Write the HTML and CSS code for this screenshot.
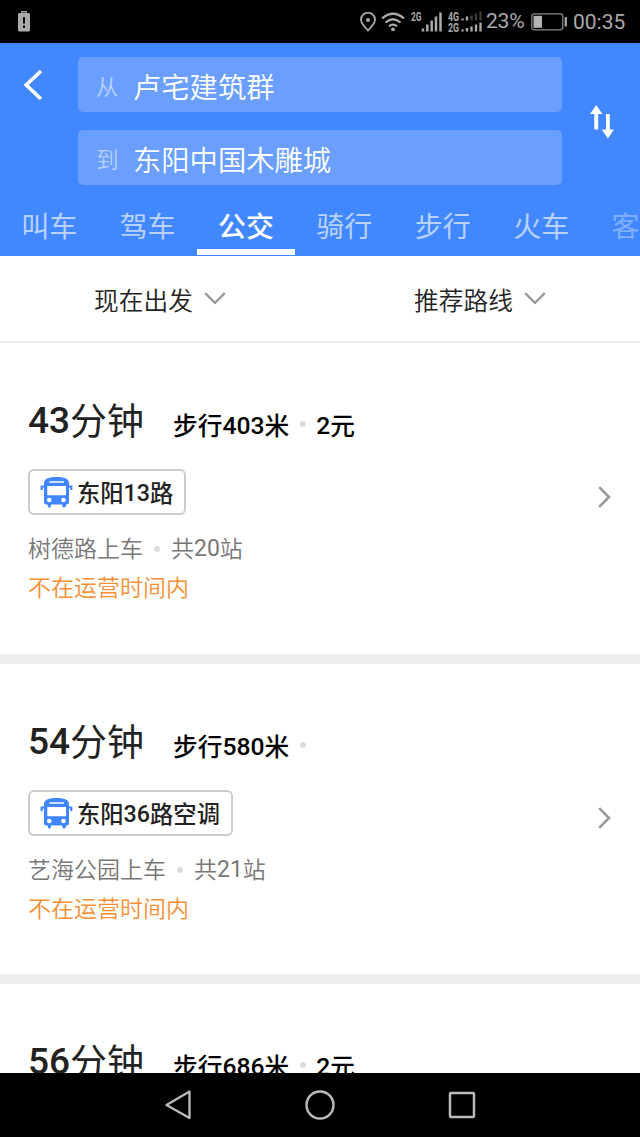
FILE: index.html
```html
<!DOCTYPE html>
<html lang="zh-CN">
<head>
    <meta charset="UTF-8">
    <title>公交路线</title>
    <link rel="stylesheet" href="styles.css">
</head>
<body>
    <svg class="defs" width="0" height="0">
        <symbol id="bus" viewBox="0 0 32 32">
            <path fill="#3f86ff" fill-rule="evenodd" d="M3.500 7 C3.500 2.500 9 1 16 1 S28.500 2.500 28.500 7 V26 Q28.500 28.500 26 28.500 H25.500 V29.500 Q25 31.500 24 31.500 H23 Q22 31.500 21.500 28.500 H10.500 Q10.500 31.500 9.500 31.500 H8.500 Q7.500 31.500 7 28.500 H6 Q3.500 28.500 3.500 26 Z M9.500 5.200 Q8.700 5.200 8.700 6 T9.500 6.800 H22.800 Q23.600 6.800 23.600 6 T22.800 5.200 Z M6.800 10 V19.200 H25.500 V10 Z"/>
            <circle cx="8.800" cy="24" r="2.300" fill="#fff"/>
            <circle cx="23" cy="24" r="2.300" fill="#fff"/>
            <path d="M1.200 14 V10.500 H5 M30.800 14 V10.500 H27.500" fill="none" stroke="#3f86ff" stroke-width="2.200"/>
        </symbol>
    </svg>

    <div class="phone">
        <div class="status">
            <svg class="alert" width="12" height="21" viewBox="0 0 12 21">
                <rect x="3" y="0" width="6" height="1.500" fill="#aaa"/>
                <rect x="0" y="2" width="12" height="18.500" rx="1.500" fill="#aaa"/>
                <path d="M6 6 V12.500 M6 14.500 V17" stroke="#000" stroke-width="2"/>
            </svg>
            <svg class="pin" width="16" height="20" viewBox="0 0 16 20">
                <path d="M8 18.500 C5 15 1 11.500 1 7.700 A7 7 0 0 1 15 7.700 C15 11.500 11 15 8 18.500 Z" fill="none" stroke="#aaa" stroke-width="1.800"/>
                <circle cx="8" cy="8" r="2" fill="#aaa"/>
            </svg>
            <svg class="wifi" width="24" height="20" viewBox="0 0 24 20">
                <g fill="none" stroke="#aaa" stroke-width="2.200">
                    <path d="M1 6.500 Q12 -3 23 6.500"/>
                    <path d="M4.500 10.500 Q12 4 19.500 10.500"/>
                    <path d="M8 14.300 Q12 11 16 14.300"/>
                </g>
                <circle cx="12" cy="17.300" r="1.900" fill="#aaa"/>
            </svg>
            <svg class="signal" width="32" height="22" viewBox="0 0 32 22">
                <text x="0" y="9.500" textLength="10.500" lengthAdjust="spacingAndGlyphs" class="net">2G</text>
                <path d="M12 20.500v-3M16.300 20.500v-7M20.700 20.500v-11M25 20.500v-15M29.500 20.500v-19" stroke="#aaa" stroke-width="2.500"/>
            </svg>
            <svg class="dual" width="35" height="22" viewBox="0 0 35 22">
                <text x="0" y="9.500" textLength="11" lengthAdjust="spacingAndGlyphs" class="net">4G</text>
                <text x="0" y="20.500" textLength="11" lengthAdjust="spacingAndGlyphs" class="net">2G</text>
                <path d="M14.500 9.500v-2M19 9.500v-4M14.500 20.500v-2M19 20.500v-3.500M23.500 20.500v-5M28 20.500v-7M32.500 20.500v-9" stroke="#aaa" stroke-width="2.300"/>
                <path d="M23.500 9.500v-5M28 9.500v-7M32.500 9.500v-9" stroke="#3c3c3c" stroke-width="2.300"/>
            </svg>
            <span class="percent">23%</span>
            <svg class="battery" width="37" height="18" viewBox="0 0 37 18">
                <rect x="0.800" y="0.800" width="31" height="16" rx="2.500" fill="none" stroke="#888" stroke-width="1.300"/>
                <rect x="2.500" y="2.800" width="8.500" height="12" fill="#b5b5b5"/>
                <path d="M34.800 4 V13.500" stroke="#aaa" stroke-width="2.200"/>
            </svg>
            <span class="clock">00:35</span>
        </div>

        <header>
            <div class="search">
                <svg class="back" width="20" height="32" viewBox="0 0 20 32">
                    <path d="M18 2 L3.200 16 L18 30" fill="none" stroke="#fff" stroke-width="3.600"/>
                </svg>
                <div class="fields">
                    <div class="field"><span>从</span>卢宅建筑群</div>
                    <div class="field"><span>到</span>东阳中国木雕城</div>
                </div>
                <svg class="swap" width="24" height="34" viewBox="0 0 24 34">
                    <path d="M6.200 0 L12.400 9 H8.200 V24.500 H4.300 V9 H0 Z M16 9 H19.800 V24.500 H24 L17.900 33.500 L11.800 24.500 H16 Z" fill="#fff"/>
                </svg>
            </div>
            <nav>
                <a>叫车</a>
                <a>驾车</a>
                <a class="active">公交</a>
                <a>骑行</a>
                <a>步行</a>
                <a>火车</a>
                <a class="faded">客车</a>
            </nav>
        </header>

        <div class="filters">
            <div>现在出发
                <svg width="22" height="13" viewBox="0 0 22 13"><path d="M1.200 1.200 L11 10.800 L20.800 1.200" fill="none" stroke="#999" stroke-width="2.400"/></svg>
            </div>
            <div>推荐路线
                <svg width="22" height="13" viewBox="0 0 22 13"><path d="M1.200 1.200 L11 10.800 L20.800 1.200" fill="none" stroke="#999" stroke-width="2.400"/></svg>
            </div>
        </div>

        <main>
            <div class="route">
                <div class="info">
                    <div class="summary"><h2><span class="num">43</span>分钟</h2><b>步行<span class="num">403</span>米</b><i></i><b><span class="num">2</span>元</b></div>
                    <div class="line"><svg width="33" height="32"><use href="#bus"/></svg><div>东阳<span class="num">13</span>路</div></div>
                    <div class="stops">树德路上车<i></i>共<span class="count">20</span>站</div>
                    <div class="warning">不在运营时间内</div>
                </div>
                <svg class="arrow" width="13" height="22" viewBox="0 0 13 22"><path d="M1.200 1.200 L11 11 L1.200 20.800" fill="none" stroke="#999" stroke-width="2.600"/></svg>
            </div>
            <div class="route">
                <div class="info">
                    <div class="summary"><h2><span class="num">54</span>分钟</h2><b>步行<span class="num">580</span>米</b><i></i></div>
                    <div class="line"><svg width="33" height="32"><use href="#bus"/></svg><div>东阳<span class="num">36</span>路空调</div></div>
                    <div class="stops">艺海公园上车<i></i>共<span class="count">21</span>站</div>
                    <div class="warning">不在运营时间内</div>
                </div>
                <svg class="arrow" width="13" height="22" viewBox="0 0 13 22"><path d="M1.200 1.200 L11 11 L1.200 20.800" fill="none" stroke="#999" stroke-width="2.600"/></svg>
            </div>
            <div class="route">
                <div class="info">
                    <div class="summary"><h2><span class="num">56</span>分钟</h2><b>步行<span class="num">686</span>米</b><i></i><b><span class="num">2</span>元</b></div>
                </div>
            </div>
        </main>

        <footer>
            <svg width="28" height="32" viewBox="0 0 28 32"><path d="M25.500 2.500 V29 L2.500 16 Z" fill="none" stroke="#bbb" stroke-width="2.300" stroke-linejoin="round"/></svg>
            <svg width="32" height="32" viewBox="0 0 32 32"><circle cx="16" cy="16" r="13.500" fill="none" stroke="#bbb" stroke-width="2.400"/></svg>
            <svg width="28" height="32" viewBox="0 0 28 32"><rect x="2" y="4" width="24" height="24" rx="1" fill="none" stroke="#bbb" stroke-width="2.500"/></svg>
        </footer>
    </div>
</body>
</html>
```
FILE: styles.css
```css
* {
    box-sizing: border-box;
}
body {
    margin: 0;
    font-family: Roboto, "Noto Sans CJK SC", sans-serif;
    background-color: #fff;
}
svg {
    flex: none;
    display: block;
}
.defs {
    display: none;
}
.phone {
    width: 640px;
    height: 1137px;
    display: flex;
    flex-direction: column;
    overflow: hidden;
}
.status {
    height: 43px;
    flex: none;
    background-color: #000;
    color: #aaa;
    display: flex;
    align-items: center;
    padding: 0 0 0 18px;
    font-size: 21px;
    line-height: 43px;
    white-space: nowrap;
}
.pin {
    margin-left: 330px;
}
.wifi {
    margin-left: 5px;
}
.signal {
    margin-left: 6px;
}
.dual {
    margin-left: 5px;
}
.net {
    font-size: 12px;
    font-weight: bold;
    fill: #aaa;
}
.percent {
    width: 44px;
    margin-left: 3px;
    letter-spacing: -0.2px;
}
.battery {
    margin-left: 1px;
}
.clock {
    margin-left: 5px;
    padding-top: 2px;
}
header {
    height: 213px;
    flex: none;
    background-color: #4187ff;
}
.search {
    display: flex;
    align-items: flex-start;
    padding: 14px 0 0 23px;
}
.back {
    margin-top: 12px;
}
.fields {
    width: 484px;
    margin-left: 35px;
    display: flex;
    flex-direction: column;
    gap: 18px;
}
.field {
    height: 55px;
    border-radius: 5px;
    background-color: #6a9fff;
    color: #fff;
    font-size: 28.3px;
    font-weight: 350;
    line-height: 63px;
    padding-left: 18px;
    display: flex;
}
.field span {
    width: 37px;
    font-size: 22.5px;
    line-height: 61px;
    color: #b8d1ff;
}
.swap {
    margin: 48px 0 0 28px;
}
nav {
    height: 71px;
    display: flex;
    overflow: hidden;
}
nav a {
    width: 98.4px;
    height: 70px;
    flex: none;
    text-align: center;
    font-size: 28px;
    line-height: 85px;
    color: #b9d2ff;
}
nav .active {
    color: #fff;
    font-weight: 500;
    border-bottom: 6px solid #fff;
}
nav .faded {
    color: #80afff;
}
.filters {
    height: 87px;
    flex: none;
    display: flex;
    border-bottom: 2px solid #eee;
    color: #222;
    font-size: 24.7px;
    font-weight: 350;
    line-height: 85px;
    padding-top: 3px;
}
.filters div {
    width: 50%;
    height: 82px;
    display: flex;
    justify-content: center;
    gap: 11px;
}
.filters svg {
    margin-top: 33px;
}
main {
    flex: 1;
    overflow: hidden;
}
.route {
    height: 320.5px;
    border-bottom: 10px solid #efefef;
    padding: 53px 29px 0 28px;
    display: flex;
    justify-content: space-between;
}
.num {
    font-weight: 500;
    vertical-align: 1px;
}
.count {
    font-weight: 400;
    vertical-align: 1px;
}
.summary {
    display: flex;
    align-items: baseline;
    height: 50px;
    line-height: 50px;
}
h2 {
    margin: 0 29px 0 0;
    font-size: 37px;
    font-weight: 430;
    color: #222;
}
h2 .num {
    vertical-align: 2px;
}
b {
    font-size: 24.7px;
    font-weight: 500;
    color: #000;
}
i {
    width: 6px;
    height: 6px;
    border-radius: 50%;
    background-color: #ddd;
    display: inline-block;
    margin: 0 10.5px;
    transform: translateY(-8px);
}
.line {
    width: fit-content;
    height: 46px;
    margin-top: 23px;
    padding: 0 11px 0 10px;
    border: 2px solid #ccc;
    border-radius: 6px;
    display: flex;
    align-items: center;
    gap: 4px;
    font-size: 23.3px;
    font-weight: 500;
    color: #222;
    line-height: 44px;
}
.line div {
    padding-top: 3px;
}
.stops {
    height: 40px;
    margin-top: 14px;
    font-size: 23px;
    font-weight: 350;
    line-height: 40px;
    color: #777;
}
.stops i {
    margin: 0 11px;
    transform: translateY(-5px);
}
.warning {
    font-size: 23px;
    font-weight: 350;
    line-height: 40px;
    color: #f78f35;
}
.arrow {
    margin-top: 90px;
}
footer {
    height: 64px;
    flex: none;
    background-color: #000;
    display: flex;
    align-items: center;
    justify-content: center;
    gap: 112px;
}
```
